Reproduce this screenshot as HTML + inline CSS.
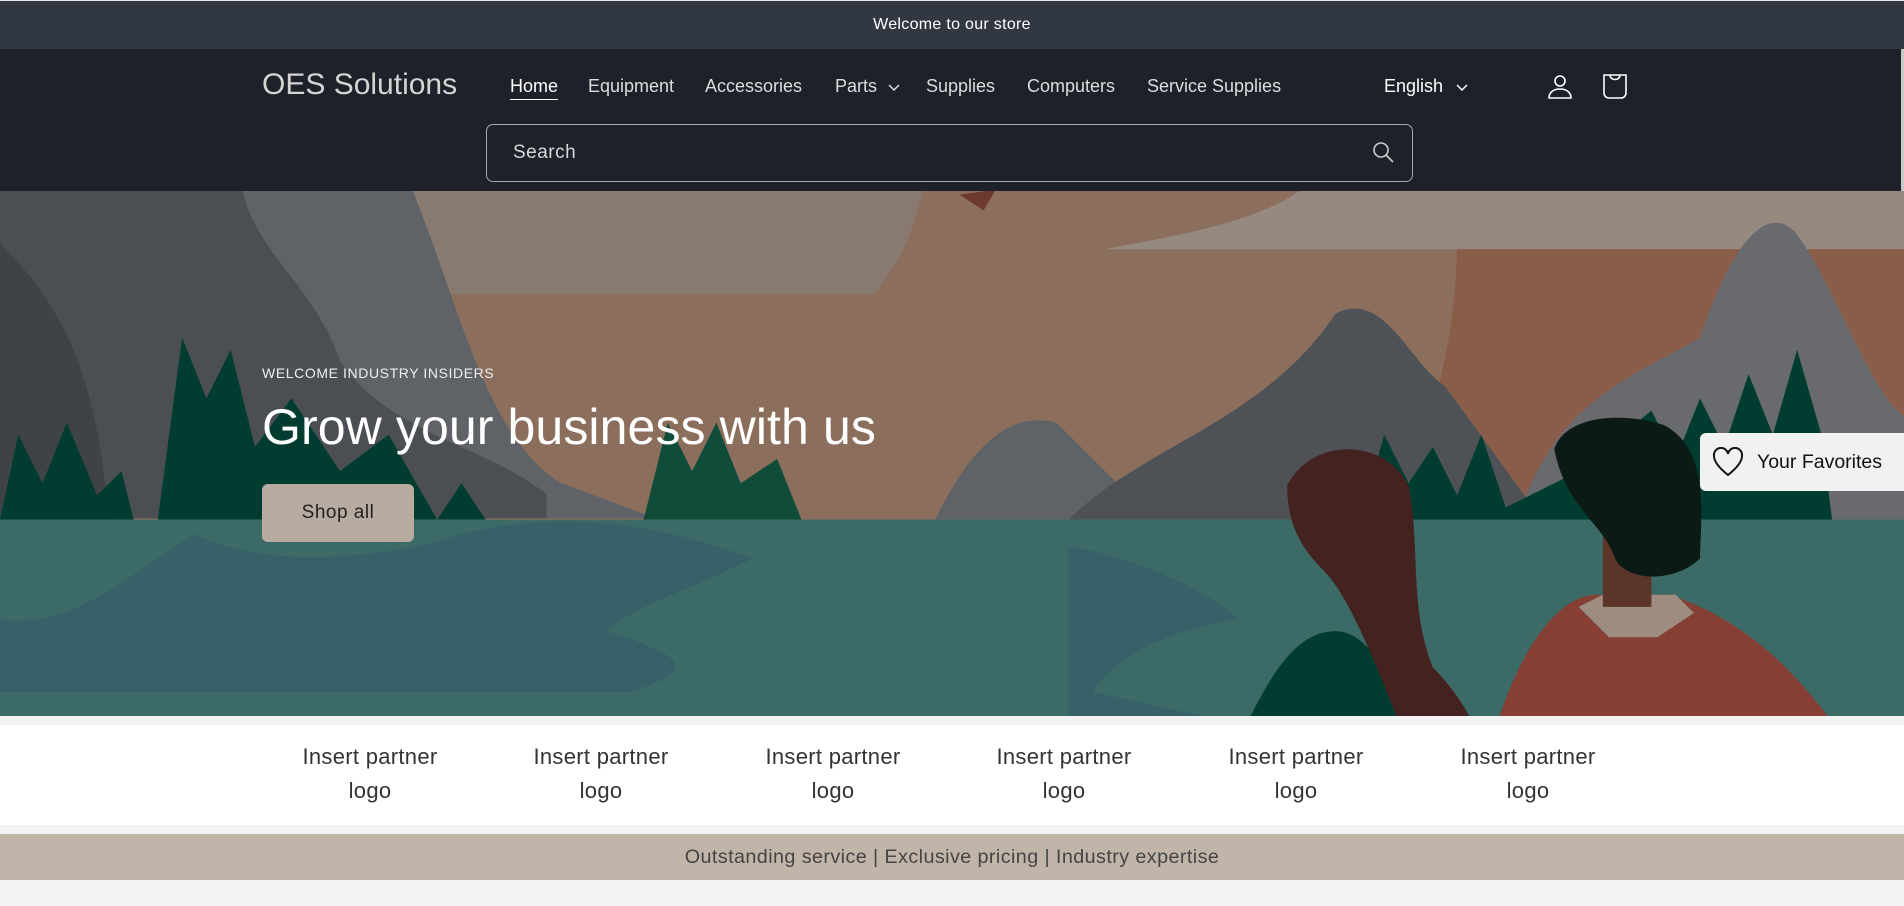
<!DOCTYPE html>
<html><head><meta charset="utf-8"><style>
*{margin:0;padding:0;box-sizing:border-box}
body{width:1904px;height:906px;overflow:hidden;background:#f3f3f3;font-family:"Liberation Sans",Arial,sans-serif;position:relative}
.ann{position:absolute;top:0;left:0;width:1904px;height:49px;background:#323842;border-top:1px solid #e8e8e8;color:#fff;font-size:16px;text-align:center;line-height:47px;letter-spacing:.3px}
.hdr{position:absolute;top:49px;left:0;width:1904px;height:142px;background:#1e2129}
.logo{position:absolute;left:262px;top:68px;color:#d4d4d4;font-size:30px}
.nav{position:absolute;top:76px;font-size:18px;color:#dcdcdc}
.search{position:absolute;left:486px;top:124px;width:927px;height:58px;border:1px solid #a8a8a8;border-radius:7px;color:#d8d8d8;font-size:19px;line-height:56px;padding-left:26px;letter-spacing:.5px}
.hero{position:absolute;top:191px;left:0;width:1904px;height:525px;overflow:hidden}
.txt{position:absolute;color:#fff}
.strip{position:absolute;top:725px;left:0;width:1904px;height:100px;background:#fff}
.p{position:absolute;top:740px;width:160px;text-align:center;font-size:22px;line-height:34px;color:#333;margin-left:-80px;letter-spacing:.3px}
.bar{position:absolute;top:834px;left:0;width:1904px;height:46px;background:#c1b5aa;text-align:center;line-height:46px;font-size:19.8px;color:#444;letter-spacing:.4px}
.fav{position:absolute;left:1700px;top:433px;width:204px;height:58px;background:#f1f1f1;border-radius:6px 0 0 6px;font-size:19.5px;color:#111;line-height:58px;padding-left:57px}
.sb{position:absolute;right:0;top:49px;width:3px;height:190px;background:#c8c8c8}
</style></head><body>
<div class="ann">Welcome to our store</div>
<div class="hdr"></div>
<div class="logo">OES Solutions</div>
<div class="nav" style="left:510px;color:#fff;border-bottom:1px solid #fff;padding-bottom:2px">Home</div>
<div class="nav" style="left:588px">Equipment</div>
<div class="nav" style="left:705px">Accessories</div>
<div class="nav" style="left:835px">Parts</div>
<svg style="position:absolute;left:888px;top:84px" width="12" height="8" viewBox="0 0 12 8"><path d="M1 1l5 5 5-5" stroke="#ddd" stroke-width="1.5" fill="none"/></svg>
<div class="nav" style="left:926px">Supplies</div>
<div class="nav" style="left:1027px">Computers</div>
<div class="nav" style="left:1147px">Service Supplies</div>
<div class="nav" style="left:1384px;color:#fff">English</div>
<svg style="position:absolute;left:1456px;top:84px" width="12" height="8" viewBox="0 0 12 8"><path d="M1 1l5 5 5-5" stroke="#fff" stroke-width="1.5" fill="none"/></svg>
<svg style="position:absolute;left:1547px;top:74px" width="26" height="26" viewBox="0 0 26 26" fill="none" stroke="#fff" stroke-width="1.6"><circle cx="13" cy="7" r="5"/><path d="M2 24c0-6 5-9 11-9s11 3 11 9z"/></svg>
<svg style="position:absolute;left:1602px;top:74px" width="26" height="26" viewBox="0 0 26 26" fill="none" stroke="#fff" stroke-width="1.6"><path d="M2 1h22v18a5 5 0 0 1-5 5H7a5 5 0 0 1-5-5z"/><path d="M8 1c0 6 10 6 10 0"/></svg>
<div class="search">Search</div>
<svg style="position:absolute;left:1372px;top:141px" width="24" height="24" viewBox="0 0 24 24" fill="none" stroke="#ccc" stroke-width="1.6"><circle cx="9" cy="9" r="7"/><path d="M14 14l7 7"/></svg>
<div class="sb"></div>
<div class="hero">
<svg width="1904" height="525" viewBox="0 157 1568 433" preserveAspectRatio="none">
<rect x="0" y="157" width="1568" height="433" fill="#8c6e5d"/>
<path d="M340 157h420c-10 40-20 60-40 85H360z" fill="#887a70"/>
<path d="M1070 157h498v48H910c50-10 120-20 160-48z" fill="#968a80"/>
<path d="M1200 205h368v220h-420c50-120 50-180 52-220z" fill="#8a5c4a"/>
<path d="M0 157h340c40 100 60 200 120 240l80 30H0z" fill="#5f6266"/>
<path d="M0 157h200c10 50 60 80 80 140 40 60 120 70 170 110v20H0z" fill="#4b4f54"/>
<path d="M0 200c60 60 80 120 90 230H0z" fill="#3f4246"/>
<path d="M770 428c30-60 60-90 100-80l80 80z" fill="#5f6266"/>
<path d="M880 428c60-60 160-80 220-170 40-20 60 40 90 60l80 110z" fill="#4e5257"/>
<path d="M1250 428c30-100 100-120 150-150 30-90 60-110 80-85 30 40 60 130 88 150v85z" fill="#686a6e"/>
<path d="M0 428l15-70 20 40 20-50 25 60 20-20 10 40z" fill="#003d30"/>
<path d="M130 428l20-150 20 50 20-40 20 80 30-40 40 60 40-30 40 70 20-30 20 30z" fill="#003d30"/>
<path d="M530 428l20-80 20 40 20-40 20 50 30-20 20 50z" fill="#0f4d3a"/>
<path d="M1120 428l20-70 20 40 20-30 20 40 20-50 20 60 60-30 60-50 20 40 20-50 20 40 20-60 20 50 20-70 20 70 10 80z" fill="#003d30"/>
<rect x="0" y="428" width="1568" height="162" fill="#3c6b67"/>
<path d="M0 510c60 10 110-40 160-70 60 30 160 20 220 0 80-20 160-10 240 20-60 30-100 40-120 60 60 20 80 30 20 50H0z" fill="#386069"/>
<path d="M880 450c60 10 120 40 140 60-60 10-100 30-120 60l90 20H880z" fill="#386069"/>
<path d="M1030 590c20-40 40-70 70-70 30 0 50 50 60 70z" fill="#003d30"/>
<path d="M1060 400c20-40 80-40 100 0 10 50 0 100 20 150 20 20 30 40 30 40h-60c-20-50-40-100-60-120-20-20-30-40-30-70z" fill="#43221f"/>
<path d="M1235 590c20-60 50-100 80-100h60c60 20 100 60 130 100z" fill="#863f34"/>
<path d="M1300 500l20-10h60l15 15-30 20h-40z" fill="#9e8c80"/>
<path d="M1320 420h40v80h-40z" fill="#5a3528"/>
<path d="M1280 370c10-30 60-30 90-20 40 20 30 80 30 110-20 20-60 20-70 0-10-30-40-40-50-90z" fill="#0c1a16"/>
<path d="M790 160l30-4-10 17z" fill="#6e3a2e"/>
</svg>
</div>
<div class="txt" style="left:262px;top:365px;font-size:14px;letter-spacing:.6px;color:#eee">WELCOME INDUSTRY INSIDERS</div>
<div class="txt" style="left:262px;top:398px;font-size:50px;letter-spacing:.1px">Grow your business with us</div>
<div style="position:absolute;left:262px;top:484px;width:152px;height:58px;background:#b8aca2;border-radius:6px;color:#222;font-size:19px;text-align:center;line-height:58px;letter-spacing:.5px">Shop all</div>
<div class="fav"><svg style="position:absolute;left:12px;top:14px" width="32" height="30" viewBox="0 0 32 30" fill="none" stroke="#111" stroke-width="2"><path d="M16 28C6 20 2 14 2 9a7 7 0 0 1 14-2 7 7 0 0 1 14 2c0 5-4 11-14 19z"/></svg>Your Favorites</div>
<div class="strip"></div>
<div class="p" style="left:370px">Insert partner logo</div>
<div class="p" style="left:601px">Insert partner logo</div>
<div class="p" style="left:833px">Insert partner logo</div>
<div class="p" style="left:1064px">Insert partner logo</div>
<div class="p" style="left:1296px">Insert partner logo</div>
<div class="p" style="left:1528px">Insert partner logo</div>
<div class="bar">Outstanding service | Exclusive pricing | Industry expertise</div>
</body></html>
